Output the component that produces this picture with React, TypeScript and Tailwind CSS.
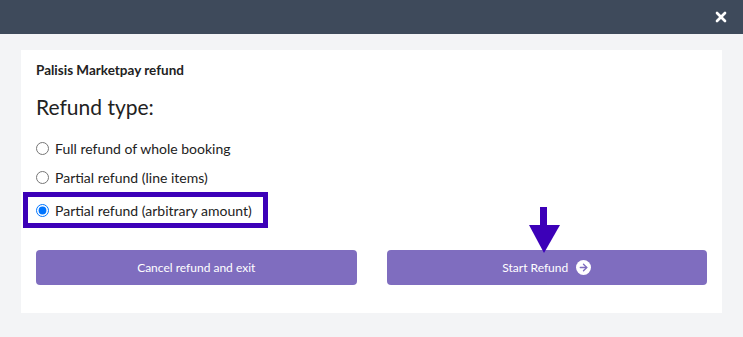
import { ArrowRight, X } from 'lucide-react';

const options = [
	'Full refund of whole booking',
	'Partial refund (line items)',
	'Partial refund (arbitrary amount)'
];

export default function App() {
	return (
		<main
			className="w-[743px] h-[337px] bg-[#f3f4f6] flex flex-col text-[#222]"
			style={{ fontFamily: 'Lato, "Open Sans", sans-serif' }}
		>
			<header className="h-[34px] bg-[#3e4a5b] flex items-center justify-end pr-[14px]">
				<X className="h-[16px] w-[16px] text-white" strokeWidth={4} />
			</header>
			<div className="mx-[21px] mt-[16px] bg-white h-[263px] flex flex-col px-[15px] pt-[12px]">
				<h3 className="text-[13.5px] font-bold leading-[16px]">Palisis Marketpay refund</h3>
				<h2 className="text-[21px] leading-[26px] mt-[16px]">Refund type:</h2>
				<div className="flex flex-col mt-[11px]">
					{options.map((o, i) => (
						<label
							key={o}
							className={
								i === 2
									? 'flex items-center gap-[6px] text-[14px] h-[36px] w-[245px] -ml-[13px] pl-[8px] border-[5px] border-[#3c00b8] mt-[3px]'
									: 'flex items-center gap-[6px] text-[14px] h-[24px] mt-[5px]'
							}
						>
							<input
								type="radio"
								name="refund"
								defaultChecked={i === 2}
								className="w-[13px] h-[13px] m-0"
							/>
							<span>{o}</span>
						</label>
					))}
				</div>
				<div className="flex gap-[30px] mt-[22px]">
					<button className="flex-1 h-[35px] rounded-[4px] bg-[#7f6dbf] text-white text-[12px] flex items-center justify-center">
						Cancel refund and exit
					</button>
					<div className="flex-1 relative">
						<svg
							className="absolute left-[142px] -top-[43px]"
							width="32"
							height="46"
							viewBox="0 0 32 46"
						>
							<rect x="11" y="0" width="7" height="20" fill="#3c00b8" />
							<polygon points="0,18 31,18 15,46" fill="#3c00b8" />
						</svg>
						<button className="w-full h-[35px] rounded-[4px] bg-[#7f6dbf] text-white text-[12px] flex items-center justify-center gap-[8px]">
							Start Refund
							<span className="w-[15px] h-[15px] rounded-full bg-white flex items-center justify-center">
								<ArrowRight className="w-[11px] h-[11px] text-[#7f6dbf]" strokeWidth={3} />
							</span>
						</button>
					</div>
				</div>
			</div>
		</main>
	);
}
